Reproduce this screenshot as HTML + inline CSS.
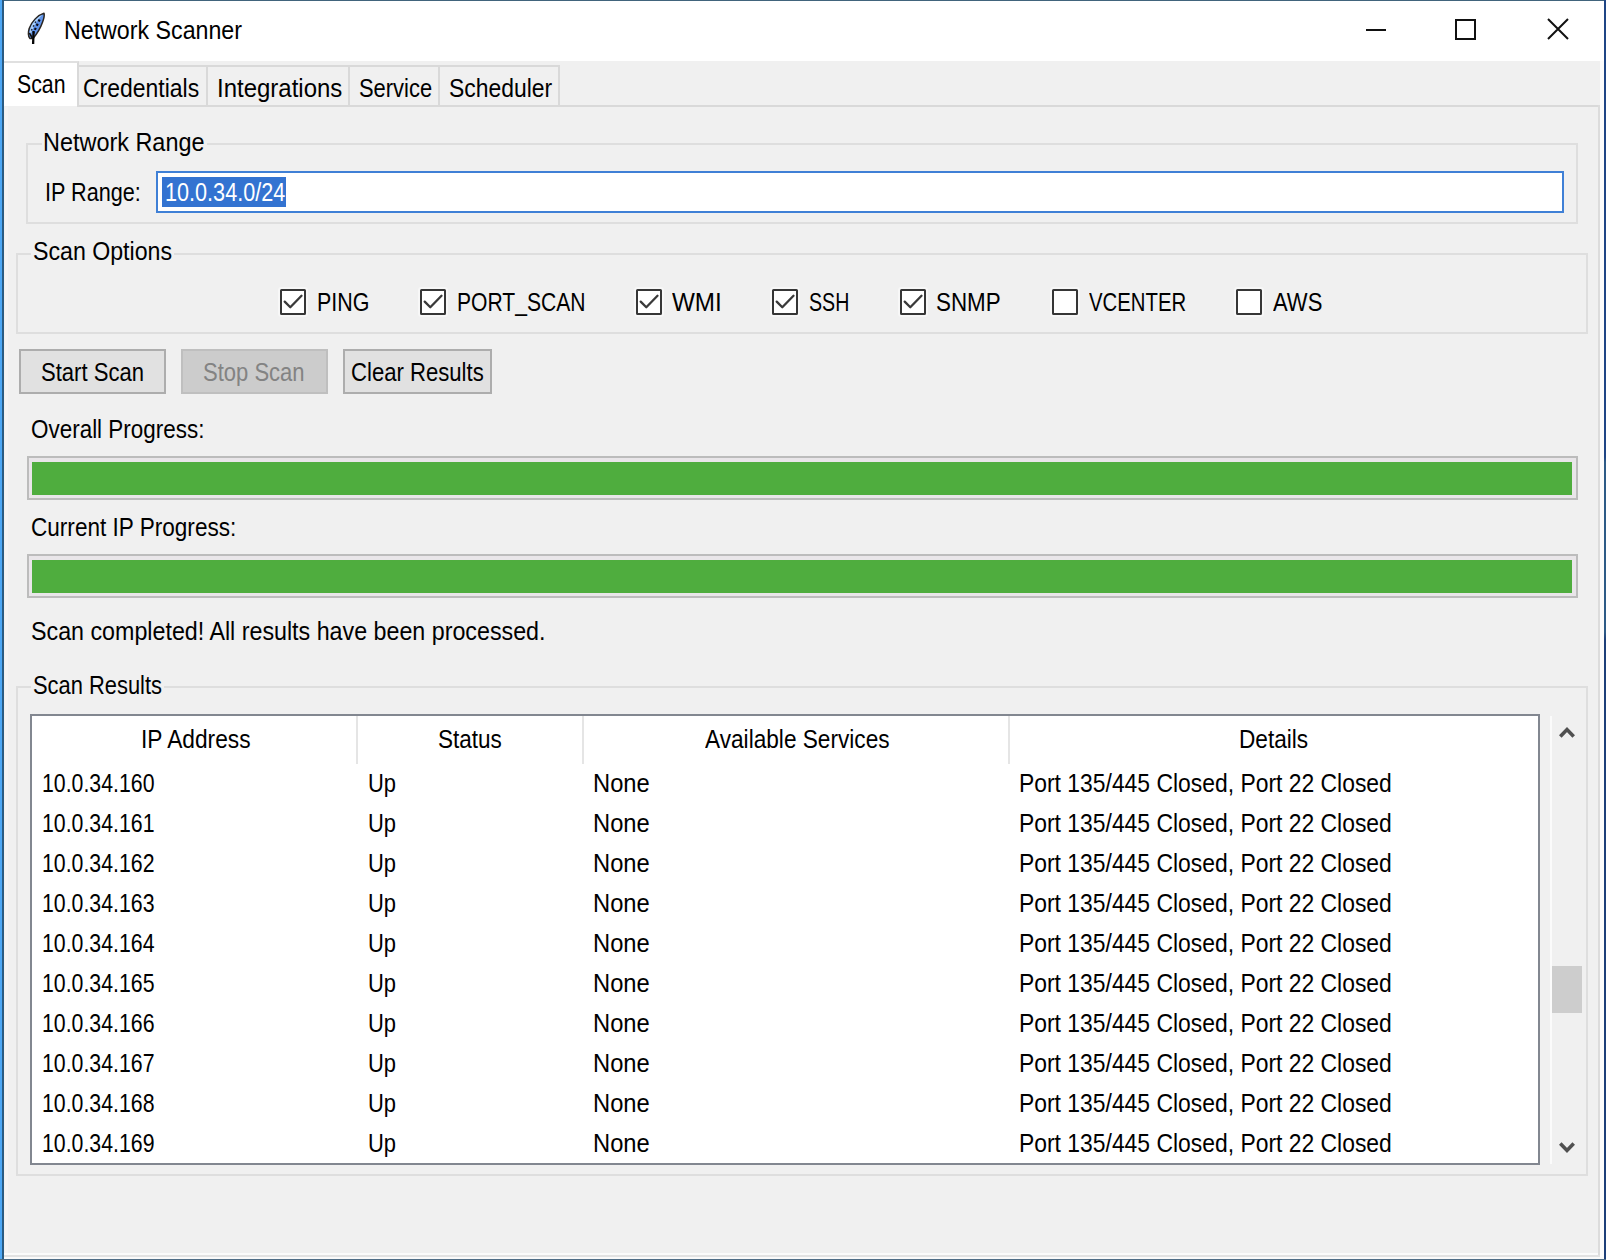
<!DOCTYPE html>
<html lang="en"><head><meta charset="utf-8"><title>Network Scanner</title>
<style>
html,body{margin:0;padding:0;background:#f0f0f0;}
body{width:1606px;height:1260px;position:relative;overflow:hidden;font-family:"Liberation Sans",sans-serif;font-size:25px;color:#000;}
.b{position:absolute;}
.t{position:absolute;white-space:pre;line-height:30px;height:30px;transform-origin:0 0;display:block;}
</style></head>
<body>
<div class="b" style="left:0px;top:0px;width:1606px;height:1260px;background:#f0f0f0;"></div>
<div class="window">
<div class="b titlebar" style="left:4px;top:1px;width:1600px;height:60px;background:#fff;"></div>
<div class="b" style="left:0px;top:0px;width:1606px;height:1.3px;background:#41647c;"></div>
<div class="b" style="left:0px;top:0px;width:2.3px;height:1260px;background:#4da7f5;"></div>
<div class="b" style="left:2.3px;top:0px;width:1.9px;height:1260px;background:#2a5b82;"></div>
<div class="b" style="left:1604px;top:0px;width:2px;height:1260px;background:linear-gradient(#1f4585 0,#1f4585 457px,#2e5b86 462px,#2e5b86 632px,#1d3f79 640px,#1d3f79 100%);"></div>
<div class="b" style="left:0px;top:1259px;width:1606px;height:1px;background:#4f6d86;"></div>
<div class="titlebar-content">
<svg class="b" style="left:24px;top:8px" width="26" height="40" viewBox="24 8 26 40">
<path d="M44 13.2 C38 15 31.5 21.5 29.2 28.5 C28 32.5 28 36 29.8 38.4 L33 38.6 C36 35 40.5 28 42.6 22 C43.9 18.5 44.7 15.5 44 13.2 Z" fill="#5f93ea" stroke="#2a2622" stroke-width="1.5" stroke-linejoin="round"/>
<path d="M42.6 14.6 C38 16.5 32.5 22 30.4 28.6 C29.5 31.8 29.4 34.6 30.4 36.8 C31.2 31 35.5 21.5 42.6 14.6 Z" fill="#a9d0fb"/>
<path d="M39.6 19.5 L33.4 33" fill="none" stroke="#0b0b14" stroke-width="2.2" stroke-dasharray="2.2 2.4"/>
<path d="M35.8 21.5 L30.8 31.5" fill="none" stroke="#1d2436" stroke-width="1.4" stroke-dasharray="1.6 2.6"/>
<path d="M33.6 31 L33.1 44" fill="none" stroke="#050505" stroke-width="2.3"/>
<path d="M29.4 33 L32.6 38.5" fill="none" stroke="#111" stroke-width="1.6"/>
</svg>
<span class="t title" style="left:64.00px;top:15.00px;transform:scaleX(0.9283);">Network Scanner</span>
<div class="b" style="left:1366px;top:29px;width:20px;height:2px;background:#111;"></div>
<div class="b" style="left:1455px;top:19px;width:21px;height:21px;border:2px solid #111;box-sizing:border-box;"></div>
<svg class="b" style="left:1545px;top:16px" width="26" height="26" viewBox="0 0 26 26"><path d="M3 3 L23 23 M23 3 L3 23" stroke="#111" stroke-width="2" fill="none"/></svg>
</div><div class="notebook">
<div class="b" style="left:4.5px;top:107px;width:3px;height:1146px;background:#f4f3f3;"></div>
<div class="b pane-top" style="left:79px;top:105px;width:1521px;height:2px;background:#d9d9d9;"></div>
<div class="b pane-right" style="left:1598px;top:105px;width:2px;height:1152px;background:#dcdcdc;"></div>
<div class="b" style="left:4.2px;top:1253px;width:1593.8px;height:2px;background:#fbfbfb;"></div>
<div class="b pane-bottom" style="left:4.2px;top:1255px;width:1595.8px;height:2px;background:#e2e2e2;"></div>
<div class="b" style="left:1600px;top:61px;width:4px;height:1198px;background:#fcfcfc;"></div>
<div class="b" style="left:4.2px;top:1257px;width:1599.8px;height:2px;background:#fafafa;"></div>
<div class="b tabs" style="left:77px;top:65px;width:483px;height:42px;border:2px solid #d9d9d9;box-sizing:border-box;background:#f0f0f0;"></div>
<div class="b" style="left:206px;top:67px;width:2px;height:38px;background:#d9d9d9;"></div>
<div class="b" style="left:348px;top:67px;width:2px;height:38px;background:#d9d9d9;"></div>
<div class="b" style="left:438px;top:67px;width:2px;height:38px;background:#d9d9d9;"></div>
<span class="t " style="left:83.10px;top:73.00px;transform:scaleX(0.9182);">Credentials</span>
<span class="t " style="left:216.70px;top:73.00px;transform:scaleX(0.9592);">Integrations</span>
<span class="t " style="left:358.90px;top:73.00px;transform:scaleX(0.8768);">Service</span>
<span class="t " style="left:448.50px;top:73.00px;transform:scaleX(0.9159);">Scheduler</span>
<div class="b tab sel" style="left:4.2px;top:61px;width:74.8px;height:45px;background:#fff;border-top:2px solid #e0e0e0;border-right:2px solid #d9d9d9;box-sizing:border-box;"></div>
<span class="t " style="left:16.80px;top:69.00px;transform:scaleX(0.8509);">Scan</span>
<div class="tab-page"><div class="labelframe network-range">
<div class="b group" style="left:26.4px;top:143.4px;width:1551.6px;height:80.6px;border:2px solid #dedede;box-sizing:border-box;"></div>
<div class="b" style="left:41.5px;top:130px;width:165px;height:28px;background:#f0f0f0;"></div>
<span class="t " style="left:43.10px;top:127.00px;transform:scaleX(0.9373);">Network Range</span>
<span class="t " style="left:45.20px;top:177.00px;transform:scaleX(0.8650);">IP Range:</span>
<div class="b entry" style="left:156px;top:171px;width:1408px;height:42px;border:2px solid #3f80d6;box-sizing:border-box;background:#fff;"></div>
<div class="b" style="left:162.4px;top:177px;width:123.9px;height:29.5px;background:#3373d1;"></div>
<span class="t " style="left:165.00px;top:177.00px;transform:scaleX(0.8655);color:#fff;">10.0.34.0/24</span>
</div><div class="labelframe scan-options">
<div class="b group" style="left:16.4px;top:252.6px;width:1571.6px;height:81.9px;border:2px solid #dedede;box-sizing:border-box;"></div>
<div class="b" style="left:31px;top:240px;width:143px;height:28px;background:#f0f0f0;"></div>
<span class="t " style="left:33.00px;top:236.40px;transform:scaleX(0.9263);">Scan Options</span>
<div class="b cb" style="left:280px;top:288.5px;width:26.4px;height:26.2px;border:2px solid #363636;border-radius:1.5px;box-shadow:0 0 0 2px rgba(255,255,255,.45);box-sizing:border-box;background:#fff;"><svg width="22" height="22" viewBox="0 0 22 22" style="position:absolute;left:0;top:0"><path d="M2.7 10.6 L8.3 16.3 L19.5 4.8" stroke="#3a3a3a" stroke-width="2.3" stroke-linecap="round" stroke-linejoin="round" fill="none"/></svg></div>
<span class="t " style="left:317.30px;top:286.60px;transform:scaleX(0.8573);">PING</span>
<div class="b cb" style="left:420px;top:288.5px;width:26.4px;height:26.2px;border:2px solid #363636;border-radius:1.5px;box-shadow:0 0 0 2px rgba(255,255,255,.45);box-sizing:border-box;background:#fff;"><svg width="22" height="22" viewBox="0 0 22 22" style="position:absolute;left:0;top:0"><path d="M2.7 10.6 L8.3 16.3 L19.5 4.8" stroke="#3a3a3a" stroke-width="2.3" stroke-linecap="round" stroke-linejoin="round" fill="none"/></svg></div>
<span class="t " style="left:457.30px;top:286.60px;transform:scaleX(0.8433);">PORT_SCAN</span>
<div class="b cb" style="left:636px;top:288.5px;width:26.4px;height:26.2px;border:2px solid #363636;border-radius:1.5px;box-shadow:0 0 0 2px rgba(255,255,255,.45);box-sizing:border-box;background:#fff;"><svg width="22" height="22" viewBox="0 0 22 22" style="position:absolute;left:0;top:0"><path d="M2.7 10.6 L8.3 16.3 L19.5 4.8" stroke="#3a3a3a" stroke-width="2.3" stroke-linecap="round" stroke-linejoin="round" fill="none"/></svg></div>
<span class="t " style="left:671.80px;top:286.60px;transform:scaleX(0.9693);">WMI</span>
<div class="b cb" style="left:772px;top:288.5px;width:26.4px;height:26.2px;border:2px solid #363636;border-radius:1.5px;box-shadow:0 0 0 2px rgba(255,255,255,.45);box-sizing:border-box;background:#fff;"><svg width="22" height="22" viewBox="0 0 22 22" style="position:absolute;left:0;top:0"><path d="M2.7 10.6 L8.3 16.3 L19.5 4.8" stroke="#3a3a3a" stroke-width="2.3" stroke-linecap="round" stroke-linejoin="round" fill="none"/></svg></div>
<span class="t " style="left:808.80px;top:286.60px;transform:scaleX(0.7844);">SSH</span>
<div class="b cb" style="left:900px;top:288.5px;width:26.4px;height:26.2px;border:2px solid #363636;border-radius:1.5px;box-shadow:0 0 0 2px rgba(255,255,255,.45);box-sizing:border-box;background:#fff;"><svg width="22" height="22" viewBox="0 0 22 22" style="position:absolute;left:0;top:0"><path d="M2.7 10.6 L8.3 16.3 L19.5 4.8" stroke="#3a3a3a" stroke-width="2.3" stroke-linecap="round" stroke-linejoin="round" fill="none"/></svg></div>
<span class="t " style="left:936.30px;top:286.60px;transform:scaleX(0.8955);">SNMP</span>
<div class="b cb" style="left:1052px;top:288.5px;width:26.4px;height:26.2px;border:2px solid #363636;border-radius:1.5px;box-shadow:0 0 0 2px rgba(255,255,255,.45);box-sizing:border-box;background:#fff;"></div>
<span class="t " style="left:1088.50px;top:286.60px;transform:scaleX(0.8130);">VCENTER</span>
<div class="b cb" style="left:1236px;top:288.5px;width:26.4px;height:26.2px;border:2px solid #363636;border-radius:1.5px;box-shadow:0 0 0 2px rgba(255,255,255,.45);box-sizing:border-box;background:#fff;"></div>
<span class="t " style="left:1272.80px;top:286.60px;transform:scaleX(0.8804);">AWS</span>
</div><div class="button-row">
<div class="b btn" style="left:18.5px;top:348.5px;width:147.5px;height:45.5px;border:2px solid #adadad;box-sizing:border-box;background:#e1e1e1;"></div>
<span class="t " style="left:40.60px;top:356.80px;transform:scaleX(0.8822);">Start Scan</span>
<div class="b btn" style="left:180.6px;top:348.5px;width:147.4px;height:45.5px;border:2px solid #bfbfbf;box-sizing:border-box;background:#cccccc;"></div>
<span class="t " style="left:203.40px;top:356.80px;transform:scaleX(0.8806);color:#838383;">Stop Scan</span>
<div class="b btn" style="left:342.5px;top:348.5px;width:149.7px;height:45.5px;border:2px solid #adadad;box-sizing:border-box;background:#e1e1e1;"></div>
<span class="t " style="left:351.40px;top:356.80px;transform:scaleX(0.8843);">Clear Results</span>
</div><div class="progress-area">
<span class="t " style="left:31.30px;top:414.20px;transform:scaleX(0.8979);">Overall Progress:</span>
<div class="b pb" style="left:26.5px;top:456px;width:1551.5px;height:44px;border:2px solid #bcbcbc;box-sizing:border-box;background:#e9e6e9;"><div style="position:absolute;left:3.7px;top:4px;right:3.7px;bottom:3.3px;background:#4fad3e"></div></div>
<span class="t " style="left:31.30px;top:512.20px;transform:scaleX(0.9027);">Current IP Progress:</span>
<div class="b pb" style="left:26.5px;top:554px;width:1551.5px;height:44px;border:2px solid #bcbcbc;box-sizing:border-box;background:#e9e6e9;"><div style="position:absolute;left:3.7px;top:4px;right:3.7px;bottom:3.3px;background:#4fad3e"></div></div>
<span class="t " style="left:30.90px;top:616.20px;transform:scaleX(0.9302);">Scan completed! All results have been processed.</span>
</div><div class="labelframe scan-results">
<div class="b group" style="left:16.4px;top:685.6px;width:1571.6px;height:490.4px;border:2px solid #dedede;box-sizing:border-box;"></div>
<div class="b" style="left:31px;top:672px;width:133px;height:28px;background:#f0f0f0;"></div>
<span class="t " style="left:32.70px;top:669.50px;transform:scaleX(0.8757);">Scan Results</span>
<div class="b tree" style="left:30px;top:714px;width:1510px;height:450.5px;border:2px solid #828790;box-sizing:border-box;background:#fff;"></div>
<div class="b" style="left:356px;top:716px;width:2px;height:47.5px;background:#e5e5e5;"></div>
<div class="b" style="left:582px;top:716px;width:2px;height:47.5px;background:#e5e5e5;"></div>
<div class="b" style="left:1008px;top:716px;width:2px;height:47.5px;background:#e5e5e5;"></div>
<span class="t " style="left:140.80px;top:723.70px;transform:scaleX(0.9092);">IP Address</span>
<span class="t " style="left:437.90px;top:723.70px;transform:scaleX(0.9002);">Status</span>
<span class="t " style="left:705.30px;top:723.70px;transform:scaleX(0.9057);">Available Services</span>
<span class="t " style="left:1238.80px;top:723.70px;transform:scaleX(0.9053);">Details</span>
<span class="t ip" style="left:41.70px;top:768.00px;transform:scaleX(0.8519);">10.0.34.160</span>
<span class="t " style="left:367.50px;top:768.00px;transform:scaleX(0.8767);">Up</span>
<span class="t " style="left:593.30px;top:768.00px;transform:scaleX(0.9490);">None</span>
<span class="t " style="left:1018.60px;top:768.00px;transform:scaleX(0.9155);">Port 135/445 Closed, Port 22 Closed</span>
<span class="t ip" style="left:41.70px;top:808.00px;transform:scaleX(0.8519);">10.0.34.161</span>
<span class="t " style="left:367.50px;top:808.00px;transform:scaleX(0.8767);">Up</span>
<span class="t " style="left:593.30px;top:808.00px;transform:scaleX(0.9490);">None</span>
<span class="t " style="left:1018.60px;top:808.00px;transform:scaleX(0.9155);">Port 135/445 Closed, Port 22 Closed</span>
<span class="t ip" style="left:41.70px;top:848.00px;transform:scaleX(0.8519);">10.0.34.162</span>
<span class="t " style="left:367.50px;top:848.00px;transform:scaleX(0.8767);">Up</span>
<span class="t " style="left:593.30px;top:848.00px;transform:scaleX(0.9490);">None</span>
<span class="t " style="left:1018.60px;top:848.00px;transform:scaleX(0.9155);">Port 135/445 Closed, Port 22 Closed</span>
<span class="t ip" style="left:41.70px;top:888.00px;transform:scaleX(0.8519);">10.0.34.163</span>
<span class="t " style="left:367.50px;top:888.00px;transform:scaleX(0.8767);">Up</span>
<span class="t " style="left:593.30px;top:888.00px;transform:scaleX(0.9490);">None</span>
<span class="t " style="left:1018.60px;top:888.00px;transform:scaleX(0.9155);">Port 135/445 Closed, Port 22 Closed</span>
<span class="t ip" style="left:41.70px;top:928.00px;transform:scaleX(0.8519);">10.0.34.164</span>
<span class="t " style="left:367.50px;top:928.00px;transform:scaleX(0.8767);">Up</span>
<span class="t " style="left:593.30px;top:928.00px;transform:scaleX(0.9490);">None</span>
<span class="t " style="left:1018.60px;top:928.00px;transform:scaleX(0.9155);">Port 135/445 Closed, Port 22 Closed</span>
<span class="t ip" style="left:41.70px;top:968.00px;transform:scaleX(0.8519);">10.0.34.165</span>
<span class="t " style="left:367.50px;top:968.00px;transform:scaleX(0.8767);">Up</span>
<span class="t " style="left:593.30px;top:968.00px;transform:scaleX(0.9490);">None</span>
<span class="t " style="left:1018.60px;top:968.00px;transform:scaleX(0.9155);">Port 135/445 Closed, Port 22 Closed</span>
<span class="t ip" style="left:41.70px;top:1008.00px;transform:scaleX(0.8519);">10.0.34.166</span>
<span class="t " style="left:367.50px;top:1008.00px;transform:scaleX(0.8767);">Up</span>
<span class="t " style="left:593.30px;top:1008.00px;transform:scaleX(0.9490);">None</span>
<span class="t " style="left:1018.60px;top:1008.00px;transform:scaleX(0.9155);">Port 135/445 Closed, Port 22 Closed</span>
<span class="t ip" style="left:41.70px;top:1048.00px;transform:scaleX(0.8519);">10.0.34.167</span>
<span class="t " style="left:367.50px;top:1048.00px;transform:scaleX(0.8767);">Up</span>
<span class="t " style="left:593.30px;top:1048.00px;transform:scaleX(0.9490);">None</span>
<span class="t " style="left:1018.60px;top:1048.00px;transform:scaleX(0.9155);">Port 135/445 Closed, Port 22 Closed</span>
<span class="t ip" style="left:41.70px;top:1088.00px;transform:scaleX(0.8519);">10.0.34.168</span>
<span class="t " style="left:367.50px;top:1088.00px;transform:scaleX(0.8767);">Up</span>
<span class="t " style="left:593.30px;top:1088.00px;transform:scaleX(0.9490);">None</span>
<span class="t " style="left:1018.60px;top:1088.00px;transform:scaleX(0.9155);">Port 135/445 Closed, Port 22 Closed</span>
<span class="t ip" style="left:41.70px;top:1128.00px;transform:scaleX(0.8519);">10.0.34.169</span>
<span class="t " style="left:367.50px;top:1128.00px;transform:scaleX(0.8767);">Up</span>
<span class="t " style="left:593.30px;top:1128.00px;transform:scaleX(0.9490);">None</span>
<span class="t " style="left:1018.60px;top:1128.00px;transform:scaleX(0.9155);">Port 135/445 Closed, Port 22 Closed</span>
<div class="b" style="left:1550px;top:716px;width:2px;height:448px;background:#fbfbfb;"></div>
<div class="b" style="left:1552px;top:966px;width:29.6px;height:47.3px;background:#cdcdcd;"></div>
<svg class="b" style="left:1556px;top:722px" width="22" height="20" viewBox="0 0 22 20"><path d="M4.3 14.5 L11 7.6 L17.7 14.5" stroke="#505050" stroke-width="3.6" fill="none"/></svg>
<svg class="b" style="left:1556px;top:1138px" width="22" height="20" viewBox="0 0 22 20"><path d="M4.3 5.5 L11 12.4 L17.7 5.5" stroke="#505050" stroke-width="3.6" fill="none"/></svg>
</div></div></div></div>
</body></html>
